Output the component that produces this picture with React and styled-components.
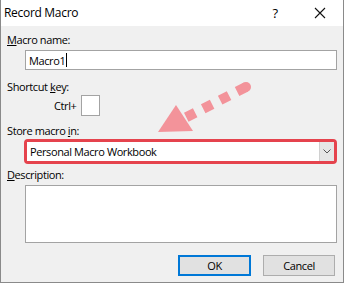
import styled, { createGlobalStyle } from "styled-components";

const GlobalStyle = createGlobalStyle`
  html, body {
    margin: 0;
    padding: 0;
    background: #ffffff;
  }
  body {
    font-family: "Segoe UI", "Open Sans", "Noto Sans", sans-serif;
    font-size: 11px;
    letter-spacing: -0.4px;
    color: #000;
  }
`;

const Window = styled.div`
  position: relative;
  width: 344px;
  height: 283px;
  box-sizing: border-box;
  border: 1px solid #8a8a8a;
  border-top: none;
  background: #f0f0f0;
  display: flex;
  flex-direction: column;
  overflow: hidden;
`;

const TitleBar = styled.div`
  height: 26px;
  background: #ffffff;
  display: flex;
  align-items: center;
  padding-left: 3px;
  flex-shrink: 0;
`;

const Title = styled.div`
  flex: 1;
  font-size: 12px;
  letter-spacing: -0.3px;
  line-height: 16px;
`;

const HelpBtn = styled.div`
  width: 20px;
  text-align: center;
  font-size: 13px;
  margin-right: 12px;
`;

const CloseBtn = styled.div`
  width: 46px;
  display: flex;
  justify-content: center;
  align-items: center;
`;

const Body = styled.div`
  flex: 1;
  display: flex;
  flex-direction: column;
  padding: 0 6px;
`;

const Label = styled.div`
  line-height: 16px;
  margin-top: ${(p) => p.top || 0}px;
  white-space: nowrap;
`;

const TextBox = styled.div`
  margin-left: 18px;
  margin-top: 2px;
  height: 18px;
  background: #fff;
  border: 1px solid #a3a3a3;
  display: flex;
  align-items: center;
  padding-left: 3px;
`;

const Caret = styled.span`
  display: inline-block;
  width: 1px;
  height: 14px;
  background: #000;
  margin-left: 1px;
`;

const CtrlRow = styled.div`
  display: flex;
  align-items: center;
  padding-left: 47px;
  height: 20px;
`;

const KeyBox = styled.div`
  width: 17px;
  height: 19px;
  background: #fff;
  border: 1px solid #a3a3a3;
  margin-left: 5px;
`;

const Highlight = styled.div`
  margin-left: 17px;
  height: 25px;
  box-sizing: border-box;
  border: 3px solid #e5434d;
  border-radius: 4px;
  display: flex;
`;

const Combo = styled.div`
  flex: 1;
  background: #fff;
  display: flex;
  align-items: center;
`;

const ComboText = styled.div`
  flex: 1;
  padding-left: 3px;
  line-height: 16px;
`;

const DropButton = styled.div`
  width: 14px;
  height: 100%;
  background: #e6e6e6;
  border-left: 1px solid #d0d0d0;
  display: flex;
  justify-content: center;
  align-items: center;
`;

const TextArea = styled.div`
  margin-left: 18px;
  margin-top: 2px;
  height: 56px;
  background: #fff;
  border: 1px solid #a3a3a3;
`;

const ButtonRow = styled.div`
  display: flex;
  justify-content: flex-end;
  gap: 12px;
  margin-top: 12px;
  margin-right: 2px;
`;

const Button = styled.div`
  width: ${(p) => p.w}px;
  height: 21px;
  box-sizing: border-box;
  background: #e1e1e1;
  border: ${(p) => (p.primary ? "2px solid #0078d7" : "1px solid #adadad")};
  display: flex;
  justify-content: center;
  align-items: center;
  line-height: 16px;
`;

const Annotation = styled.svg`
  position: absolute;
  left: 0;
  top: 0;
  pointer-events: none;
`;

export default function App() {
  return (
    <>
      <GlobalStyle />
      <Window>
        <TitleBar>
          <Title>Record Macro</Title>
          <HelpBtn>?</HelpBtn>
          <CloseBtn>
            <svg width="12" height="12" viewBox="0 0 12 12">
              <path d="M1 1 L11 11 M11 1 L1 11" stroke="#111" strokeWidth="1.1" fill="none" />
            </svg>
          </CloseBtn>
        </TitleBar>
        <Body>
          <Label top={6}>
            <u>M</u>acro name:
          </Label>
          <TextBox>
            Macro1<Caret />
          </TextBox>
          <Label top={9}>
            Shortcut <u>k</u>ey:
          </Label>
          <CtrlRow>
            Ctrl+
            <KeyBox />
          </CtrlRow>
          <Label top={8}>
            Store macro <u>i</u>n:
          </Label>
          <Highlight>
            <Combo>
              <ComboText>Personal Macro Workbook</ComboText>
              <DropButton>
                <svg width="8" height="5" viewBox="0 0 8 5">
                  <path d="M0.5 0.5 L4 4 L7.5 0.5" stroke="#555" strokeWidth="1" fill="none" />
                </svg>
              </DropButton>
            </Combo>
          </Highlight>
          <Label top={3}>
            <u>D</u>escription:
          </Label>
          <TextArea />
          <ButtonRow>
            <Button w={73} primary>OK</Button>
            <Button w={72}>Cancel</Button>
          </ButtonRow>
        </Body>
        <Annotation width="344" height="283" viewBox="0 0 344 283">
          <path
            d="M245 87 L180 120"
            stroke="#f3939a"
            strokeWidth="10"
            strokeDasharray="10 9"
            fill="none"
          />
          <circle cx="245" cy="87" r="5" fill="#f3939a" />
          <polygon points="157,132 175,105 192,131" fill="#f3939a" />
        </Annotation>
      </Window>
    </>
  );
}
